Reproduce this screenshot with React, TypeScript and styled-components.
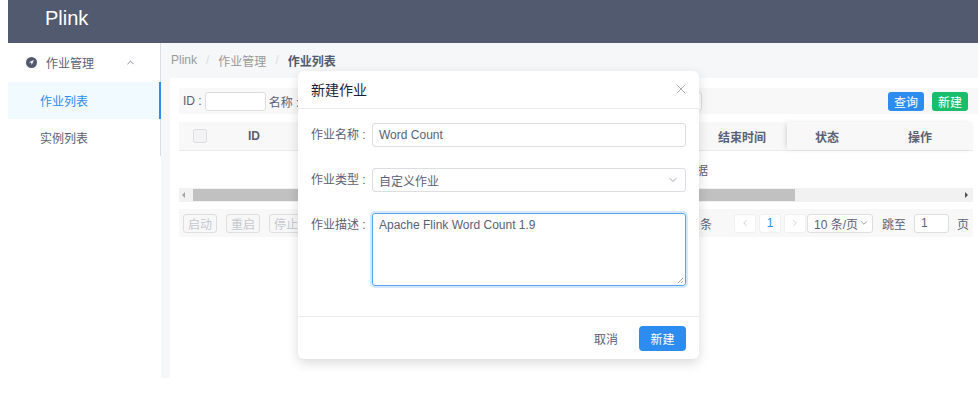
import styled, { createGlobalStyle } from "styled-components";
import { X, ChevronDown, ChevronUp, ChevronLeft, ChevronRight } from "lucide-react";

const GlobalStyle = createGlobalStyle`
  html, body {
    margin: 0;
    padding: 0;
    background: #fff;
    overflow: hidden;
  }
  body {
    margin-left: 8px;
    font-family: "Liberation Sans", "Noto Sans CJK SC", sans-serif;
    font-size: 12px;
    color: #5a6174;
  }
  * { box-sizing: border-box; }
`;

const Page = styled.div`
  position: relative;
  display: flex;
  flex-direction: column;
  width: 970px;
  height: 378px;
`;

const Header = styled.header`
  height: 43px;
  background: #515a6e;
  display: flex;
  align-items: center;
  padding-left: 37px;
  color: #fff;
  font-size: 20px;
  padding-bottom: 6px;
`;

const Main = styled.div`
  flex: 1;
  display: flex;
  min-height: 0;
`;

const Sider = styled.aside`
  width: 153px;
  background: #fff;
`;

const Menu = styled.ul`
  list-style: none;
  margin: 0;
  padding: 0;
  border-right: 1px solid #dcdee2;
`;

const SubTitle = styled.li`
  height: 39px;
  display: flex;
  align-items: center;
  padding: 0 24px 0 18px;
  gap: 9px;
`;

const SubArrow = styled.span`
  margin-left: auto;
  display: flex;
  color: #515a6e;
`;

const MenuItem = styled.li<{ $active?: boolean }>`
  height: 37px;
  display: flex;
  align-items: center;
  padding-left: 32px;
  margin-right: -1px;
  color: ${(p) => (p.$active ? "#2d8cf0" : "inherit")};
  background: ${(p) => (p.$active ? "#f0faff" : "transparent")};
  border-right: 2px solid ${(p) => (p.$active ? "#2d8cf0" : "transparent")};
`;

const Content = styled.section`
  flex: 1;
  background: #f5f7f9;
  padding-left: 9px;
  display: flex;
  flex-direction: column;
  min-width: 0;
`;

const Breadcrumb = styled.div`
  height: 35px;
  display: flex;
  align-items: center;
  gap: 9px;
  padding-left: 1px;
  padding-bottom: 1px;
`;

const Crumb = styled.span<{ $current?: boolean }>`
  color: ${(p) => (p.$current ? "#515a6e" : "#999")};
  font-weight: ${(p) => (p.$current ? 600 : 400)};
`;

const Sep = styled.span`
  color: #dcdee2;
`;

const Card = styled.div`
  flex: 1;
  background: #fff;
  padding: 10px 0 0 9px;
  display: flex;
  flex-direction: column;
  overflow: hidden;
`;

const SearchBar = styled.div`
  height: 26px;
  background: #f8f8f9;
  display: flex;
  align-items: center;
  padding: 0 10px 0 4px;
  gap: 3px;
`;

const FieldInput = styled.div<{ $w: number }>`
  width: ${(p) => p.$w}px;
  height: 19px;
  border: 1px solid #dcdee2;
  border-radius: 3px;
  background: #fff;
`;

const Spacer = styled.div`
  flex: 1;
`;

const FillButton = styled.button<{ $color: string }>`
  height: 19px;
  padding: 0 6px;
  border: none;
  border-radius: 3px;
  background: ${(p) => p.$color};
  color: #fff;
  font: inherit;
  font-size: 12px;
  margin-left: 5px;
`;

const Table = styled.div`
  margin-top: 8px;
  width: 794px;
  position: relative;
`;

const HeadRow = styled.div`
  height: 29px;
  display: flex;
  background: #f8f8f9;
  border-bottom: 1px solid #e8eaec;
  font-weight: 600;
`;

const Th = styled.div<{ $w?: number; $grow?: boolean; $start?: boolean }>`
  width: ${(p) => (p.$w ? `${p.$w}px` : "auto")};
  flex: ${(p) => (p.$grow ? 1 : "none")};
  display: flex;
  align-items: center;
  justify-content: ${(p) => (p.$start ? "flex-start" : "center")};
`;

const FixedRight = styled.div`
  display: flex;
  box-shadow: -2px 0 6px -2px rgba(0, 0, 0, 0.2);
  background: #f8f8f9;
`;

const CheckBox = styled.span`
  width: 14px;
  height: 14px;
  border: 1px solid #dcdee2;
  border-radius: 2px;
  background: #f3f3f3;
  margin-left: 14px;
`;

const Empty = styled.div`
  height: 37px;
  width: 1010px;
  display: flex;
  align-items: center;
  justify-content: center;
`;

const ScrollBar = styled.div`
  height: 14px;
  background: #f1f1f1;
  display: flex;
  align-items: center;
  padding: 0 5px 0 3px;
  gap: 8px;
`;

const Arrow = styled.span<{ $dir: "l" | "r" }>`
  width: 0;
  height: 0;
  border-top: 3px solid transparent;
  border-bottom: 3px solid transparent;
  ${(p) =>
    p.$dir === "l" ? "border-right: 3px solid #a3a3a3;" : "border-left: 3px solid #505050;"}
`;

const Thumb = styled.div`
  width: 602px;
  height: 12px;
  background: #c1c1c1;
`;

const ActionBar = styled.div`
  margin-top: 7px;
  height: 28px;
  width: 794px;
  background: #f8f8f9;
  display: flex;
  align-items: center;
  padding: 0 4px;
  gap: 9px;
`;

const GhostButton = styled.button`
  height: 19px;
  padding: 0 4px;
  border: 1px solid #dcdee2;
  border-radius: 3px;
  background: #f7f7f7;
  color: #c5c8ce;
  font: inherit;
  font-size: 12px;
`;

const Pager = styled.div`
  margin-left: auto;
  display: flex;
  align-items: center;
  gap: 3px;
  white-space: nowrap;
`;

const Total = styled.span`
  margin-right: 19px;
`;

const PageBox = styled.span<{ $active?: boolean }>`
  width: 22px;
  height: 19px;
  border: 1px solid #f0f0f0;
  border-radius: 3px;
  background: #fff;
  display: flex;
  align-items: center;
  justify-content: center;
  color: ${(p) => (p.$active ? "#2d8cf0" : "#c5c8ce")};
`;

const PageSize = styled.span`
  width: 66px;
  flex-shrink: 0;
  height: 19px;
  border: 1px solid #dcdee2;
  border-radius: 3px;
  background: #fff;
  display: flex;
  align-items: center;
  gap: 1px;
  padding: 0 3px 0 6px;
  margin-left: -2px;
`;

const Jump = styled.span`
  margin-left: 6px;
  display: flex;
  align-items: center;
  gap: 8px;
`;

const JumpInput = styled.span`
  width: 35px;
  height: 19px;
  border: 1px solid #dcdee2;
  border-radius: 3px;
  background: #fff;
  padding-left: 6px;
  display: flex;
  align-items: center;
`;

/* modal */

const Modal = styled.div`
  position: absolute;
  left: 290px;
  top: 71px;
  width: 401px;
  background: #fff;
  border-radius: 6px;
  box-shadow: 0 4px 12px rgba(0, 0, 0, 0.15);
`;

const ModalHeader = styled.div`
  height: 38px;
  border-bottom: 1px solid #e8eaec;
  display: flex;
  align-items: center;
  padding: 0 10px 2px 13px;
  font-size: 14px;
  color: #17233d;
`;

const Close = styled.span`
  margin-left: auto;
  display: flex;
  color: #999;
`;

const ModalBody = styled.div`
  padding: 14px 13px 30px 13px;
  display: flex;
  flex-direction: column;
  gap: 21px;
`;

const FormRow = styled.div`
  display: flex;
  align-items: flex-start;
`;

const Label = styled.label`
  width: 61px;
  text-align: right;
  padding-right: 8px;
  line-height: 24px;
  white-space: nowrap;
`;

const Control = styled.div<{ $focus?: boolean; $h?: number }>`
  flex: 1;
  height: ${(p) => p.$h ?? 24}px;
  border: 1px solid ${(p) => (p.$focus ? "#57a3f3" : "#dcdee2")};
  box-shadow: ${(p) => (p.$focus ? "0 0 0 2px rgba(45,140,240,.2)" : "none")};
  border-radius: 3px;
  padding: ${(p) => (p.$h ? "4px 6px" : "0 6px")};
  display: flex;
  align-items: ${(p) => (p.$h ? "flex-start" : "center")};
  position: relative;
`;

const SelectArrow = styled.span`
  margin-left: auto;
  display: flex;
  color: #808695;
`;

const Grip = styled.svg`
  position: absolute;
  right: 1px;
  bottom: 1px;
`;

const ModalFooter = styled.div`
  height: 43px;
  border-top: 1px solid #e8eaec;
  display: flex;
  align-items: center;
  justify-content: flex-end;
  padding: 0 13px;
  gap: 21px;
`;

const PrimaryButton = styled.button`
  width: 47px;
  height: 25px;
  border: none;
  border-radius: 4px;
  background: #2d8cf0;
  color: #fff;
  font: inherit;
  font-size: 12px;
`;

function NavIcon() {
  return (
    <svg width="11" height="11" viewBox="0 0 12 12">
      <circle cx="6" cy="6" r="6" fill="#515a6e" />
      <path d="M8.6 3.4 L3.2 5.8 L5.7 6.3 L6.2 8.8 Z" fill="#fff" />
    </svg>
  );
}

export default function App() {
  return (
    <>
      <GlobalStyle />
      <Page>
        <Header>Plink</Header>
        <Main>
          <Sider>
            <Menu>
              <SubTitle>
                <NavIcon />
                作业管理
                <SubArrow>
                  <ChevronUp size={11} strokeWidth={1.5} />
                </SubArrow>
              </SubTitle>
              <MenuItem $active>作业列表</MenuItem>
              <MenuItem>实例列表</MenuItem>
            </Menu>
          </Sider>
          <Content>
            <Breadcrumb>
              <Crumb>Plink</Crumb>
              <Sep>/</Sep>
              <Crumb>作业管理</Crumb>
              <Sep>/</Sep>
              <Crumb $current>作业列表</Crumb>
            </Breadcrumb>
            <Card>
              <SearchBar>
                ID :
                <FieldInput $w={61} />
                名称 :
                <FieldInput $w={400} />
                <Spacer />
                <FillButton $color="#2d8cf0">查询</FillButton>
                <FillButton $color="#19be6b">新建</FillButton>
              </SearchBar>
              <Table>
                <HeadRow>
                  <Th $w={40} $start>
                    <CheckBox />
                  </Th>
                  <Th $w={70}>ID</Th>
                  <Th $grow />
                  <Th $w={90}>结束时间</Th>
                  <FixedRight>
                    <Th $w={80}>状态</Th>
                    <Th $w={106}>操作</Th>
                  </FixedRight>
                </HeadRow>
                <Empty>暂无数据</Empty>
                <ScrollBar>
                  <Arrow $dir="l" />
                  <Thumb />
                  <Spacer />
                  <Arrow $dir="r" />
                </ScrollBar>
              </Table>
              <ActionBar>
                <GhostButton>启动</GhostButton>
                <GhostButton>重启</GhostButton>
                <GhostButton>停止</GhostButton>
                <Pager>
                  <Total>共 0 条</Total>
                  <PageBox>
                    <ChevronLeft size={10} />
                  </PageBox>
                  <PageBox $active>1</PageBox>
                  <PageBox>
                    <ChevronRight size={10} />
                  </PageBox>
                  <PageSize>
                    10 条/页
                    <ChevronDown size={10} color="#808695" />
                  </PageSize>
                  <Jump>
                    跳至
                    <JumpInput>1</JumpInput>
                    页
                  </Jump>
                </Pager>
              </ActionBar>
            </Card>
          </Content>
        </Main>

        <Modal>
          <ModalHeader>
            新建作业
            <Close>
              <X size={16} strokeWidth={1.2} />
            </Close>
          </ModalHeader>
          <ModalBody>
            <FormRow>
              <Label>作业名称 :</Label>
              <Control>Word Count</Control>
            </FormRow>
            <FormRow>
              <Label>作业类型 :</Label>
              <Control>
                自定义作业
                <SelectArrow>
                  <ChevronDown size={12} strokeWidth={1.5} />
                </SelectArrow>
              </Control>
            </FormRow>
            <FormRow>
              <Label>作业描述 :</Label>
              <Control $focus $h={73}>
                Apache Flink Word Count 1.9
                <Grip width="7" height="7" viewBox="0 0 7 7">
                  <path d="M6 1 L1 6 M6 4 L4 6" stroke="#999" strokeWidth="0.8" />
                </Grip>
              </Control>
            </FormRow>
          </ModalBody>
          <ModalFooter>
            <span>取消</span>
            <PrimaryButton>新建</PrimaryButton>
          </ModalFooter>
        </Modal>
      </Page>
    </>
  );
}
